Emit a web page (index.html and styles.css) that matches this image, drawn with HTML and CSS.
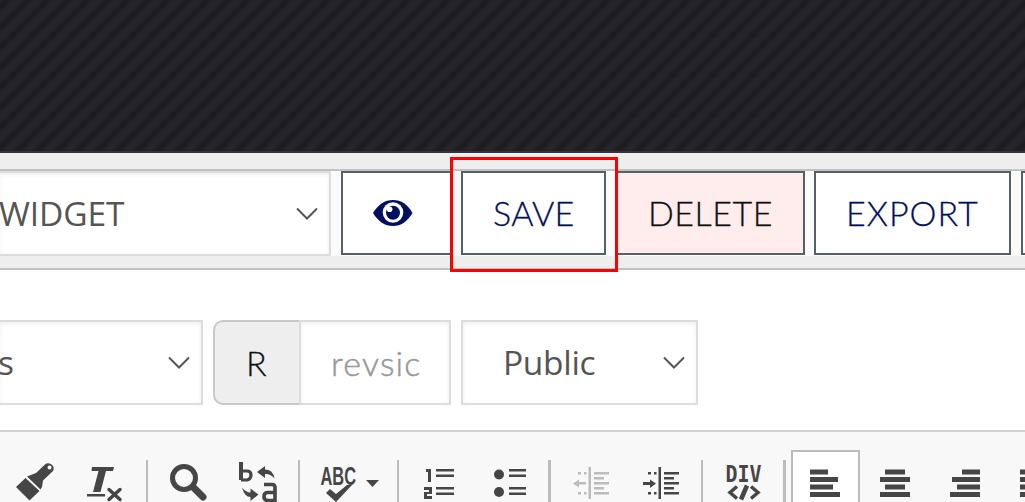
FILE: index.html
```html
<!DOCTYPE html>
<html lang="en">
<head>
<meta charset="utf-8">
<title>Widget editor</title>
<link rel="stylesheet" href="styles.css">
</head>
<body>
<div class="page">
  <header class="hero"></header>
  <div class="strip"></div>
  <nav class="actions">
    <div class="field field-widget"><span class="select-text widget-text">WIDGET</span>
      <svg class="chevron" width="22" height="14" viewBox="0 0 22 14"><path d="M1 1.5 11 11.5 21 1.5"/></svg></div>
    <button class="btn btn-view" aria-label="View"><svg width="40" height="28" viewBox="0 0 40 28"><path fill="#00105f" d="M0 14C5 5.500 12 1 20 1s15 4.500 19.500 13c-5 8.500-11.500 13-19.500 13S5 22.500 0 14Z"/><circle cx="20" cy="13.500" r="10.300" fill="#fff"/><circle cx="20" cy="13.700" r="7" fill="#00105f"/><circle cx="16.600" cy="10.300" r="2.800" fill="#fff"/></svg></button>
    <button class="btn btn-save"><span>SAVE</span></button>
    <button class="btn btn-delete"><span>DELETE</span></button>
    <button class="btn btn-export"><span>EXPORT</span></button>
    <button class="btn btn-next" aria-label="More"></button>
    <div class="highlight"></div>
  </nav>
  <section class="options">
    <div class="field field-short"><span class="select-text short-text">s</span>
      <svg class="chevron" width="22" height="14" viewBox="0 0 22 14"><path d="M1 1.500 11 11.500 21 1.500"/></svg></div>
    <div class="addon"><span>R</span></div>
    <div class="field field-revision"><span class="placeholder">revsic</span></div>
    <div class="field field-public"><span class="select-text public-text">Public</span>
      <svg class="chevron" width="22" height="14" viewBox="0 0 22 14"><path d="M1 1.500 11 11.500 21 1.500"/></svg></div>
  </section>
  <div class="toolbar">
    <svg class="tools" width="1025" height="70" viewBox="0 432 1025 70" fill="#464646">
      <g class="seps"><path d="M146 460h2v42h-2zM298 460h2v42h-2zM397 460h2v42h-2zM548 460h3v42h-3zM701 460h2v42h-2zM783 460h3v42h-3z"/></g>
      <rect x="792" y="451" width="67" height="60" fill="#fff" stroke="#bcbcbc" stroke-width="2"/>
      <path fill-rule="evenodd" d="M27 476.500 36 473 45 464.500C49 461 56 466 53 471L43 480.500 42 487 40.500 489.500ZM49.500 465.500a2 2 0 1 0 .1 0Z"/><path d="M25.500 478 39.500 491 29.500 500.500 16 487Z"/>
      <path d="M92 467h22l-1 4h-7l-5.500 21h-7.500l5.500-21h-7ZM87 494h18v2.500H87z"/>
      <path d="M109 489.500 120 499.500M120 489.500 109 499.500" stroke="#464646" stroke-width="3.500" stroke-linecap="round"/>
      <circle cx="184" cy="478" r="11.500" fill="none" stroke="#464646" stroke-width="5"/>
      <path d="M193 487 203 497" stroke="#464646" stroke-width="7" stroke-linecap="round"/>
      <g fill="none" stroke="#464646"><path stroke-width="4" d="M241 462v18"/><path stroke-width="3.200" d="M241 471h6q4 0 4 4t-4 5h-6"/><path d="M264 484.500h8q3 0 3 3v13h-7q-4 0-4-4t4-4h7" stroke-width="3.600"/></g>
      <path d="M257 472 265 466v3.500q8 0 9.500 9-4-5-9.500-4.500v4ZM258.500 494.500 250.500 501v-4q-6 0-8.500-9.500 4 5 8.500 5v-4Z"/>
      <text class="abc" x="320.500" y="484.500" textLength="35.500" lengthAdjust="spacingAndGlyphs">ABC</text>
      <path d="m326 493 4-4 6 5 11-9h5l-16 17Z"/><path d="M366 480h13l-6.500 7Z"/>
      <path d="M426 469h5v13h-3v-10h-2zM424 487h8v7h-5v2h5v3h-8v-7h5v-2h-5zM436 469h18v2.500h-18zM436 474.500h18v2.500h-18zM436 487h18v2.500h-18zM436 492.500h18v2.500h-18z"/>
      <circle cx="499" cy="474.500" r="5"/><circle cx="499" cy="492" r="5"/><path d="M509 469h17v2.500h-17zM509 474.500h17v2.500h-17zM509 487h17v2.500h-17zM509 492.500h17v2.500h-17z"/>
      <defs><path id="lines" d="M588.500 467h2.500v32h-2.500zM594 472h15v2.500h-15zM594 477h10v2.500h-10zM594 482h15v2.500h-15zM594 487h10v2.500h-10zM594 492h15v2.500h-15zM578 472h3v2.500h-3zM584 472h2.500v2.500h-2.500zM578 492h3v2.500h-3zM584 492h2.500v2.500h-2.500z"/></defs>
      <g fill="#bcbcbc"><use href="#lines"/><path d="M573 483.500l6-4v2.500h7v2.500h-7v3Z"/></g>
      <g><use href="#lines" x="70"/><path d="M656 483.500l-6-4v2.500h-7v3h7v3Z"/></g>
      <text class="div" x="725.500" y="482" textLength="36" lengthAdjust="spacingAndGlyphs">DIV</text>
      <g fill="none" stroke="#464646" stroke-width="3.500"><path d="M737 486.500 730 492.500 737 498.500M751 486.500 758 492.500 751 498.500"/><path d="M747 485.500 741 499.500" stroke-width="4.500"/></g>
      <path d="M810 469.500h18v5h-18zM810 477h28v5h-28zM810 484.500h23v5h-23zM810 492h30v5h-30zM885 469.500h20v5h-20zM880 477h30v5h-30zM885 484.500h20v5h-20zM880 492h30v5h-30zM962 469.500h18v5h-18zM952 477h28v5h-28zM957 484.500h23v5h-23zM950 492h30v5h-30zM1020 469.500h5v5h-5zM1020 477h5v5h-5zM1020 484.500h5v5h-5zM1020 492h5v5h-5z"/>
    </svg>
  </div>
</div>
</body>
</html>
```
FILE: styles.css
```css
* { box-sizing: border-box; }
body { margin: 0; background: #fff; }
.page { width: 1025px; height: 502px; overflow: hidden; }
.hero { height: 153px; border-bottom: 2px solid #353439; background: radial-gradient(circle at 3px 5px, #1b1a1f 0, #1b1a1f00 4px) 0 0 / 20px 20px, radial-gradient(circle at 13px 15px, #1b1a1f 0, #1b1a1f00 4px) 0 0 / 20px 20px, repeating-linear-gradient(135deg, #26252b 0, #1c1b20 5.657px, #26252b 11.314px, #26252b 14.142px); }
.strip { height: 18px; background: #eee; border-bottom: 2px solid #c1c1c1; }
.actions { position: relative; display: flex; height: 99px; background: linear-gradient(#fbfbfb 85px, #eee 85px); border-bottom: 2px solid #c1c1c1; }
.field { display: flex; align-items: center; height: 85px; flex: none; border: 2px solid #dcdcdc; background: #fff; box-shadow: inset 0 2px 4px #0001; overflow: hidden; }
.field-widget { width: 331px; margin-right: 10px; border-left: 0; justify-content: space-between; padding-right: 11px; }
.select-text { padding-bottom: 2px; font: 33.500px/46px "Open Sans", sans-serif; color: #555; white-space: nowrap; }
.widget-text { margin-left: -1px; letter-spacing: -0.1px; }
.short-text { margin-left: -2px; }
.public-text { letter-spacing: -0.3px; }
.chevron { flex: none; fill: none; stroke: #555; stroke-width: 2; }
.btn { display: flex; align-items: center; flex: none; height: 84px; padding: 0 0 0 30px; border: 2px solid #566067; border-radius: 0; background: #fff; color: #00105f; font: 300 34px/48px Lato, sans-serif; white-space: nowrap; -webkit-text-stroke: 0.3px; }
.btn-view { width: 110px; margin-right: 10px; border-right: 0; }
.btn-save { width: 145px; letter-spacing: 0.3px; }
.btn-delete { width: 190px; margin-left: 9px; padding-left: 31px; background: #ffeded; color: #111; letter-spacing: 0.5px; }
.btn-export { width: 197px; margin-left: 9px; letter-spacing: 1px; }
.btn-next { width: 40px; margin-left: 10px; }
.highlight { position: absolute; left: 450px; top: -14px; width: 168px; height: 115px; border: 3px solid #f00; }
.options { display: flex; height: 160px; padding-top: 50px; }
.field-short { width: 203px; margin-right: 10px; border-left: 0; justify-content: space-between; padding-right: 11px; }
.addon { display: flex; align-items: center; width: 86px; height: 85px; padding-left: 31px; border: 2px solid #c8c8c8; border-right: 0; border-radius: 10px 0 0 10px; background: #eee; color: #111; font: 300 34px/48px Lato, sans-serif; -webkit-text-stroke: 0.3px; }
.field-revision { width: 152px; margin-right: 10px; padding-left: 30px; }
.placeholder { white-space: nowrap; font: 300 34px/48px Lato, sans-serif; letter-spacing: 1.2px; color: #999; -webkit-text-stroke: 0.5px; }
.field-public { width: 237px; padding: 0 11px 0 40px; justify-content: space-between; }
.toolbar { height: 72px; border-top: 2px solid #d1d1d1; background: #f8f8f8; }
.tools { display: block; }
.seps { fill: #bcbcbc; }
.abc { font: bold 25px "Liberation Sans", sans-serif; }
.div { font: bold 23px "DejaVu Sans Mono", monospace; }
```
